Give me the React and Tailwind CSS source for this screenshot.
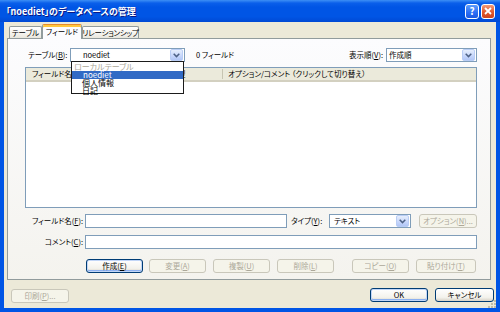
import React from "react";

const FONT = "font-['Noto_Sans_CJK_JP','Noto_Sans',sans-serif] [font-feature-settings:'palt']";

function Chevron() {
  return (
    <svg width="7" height="5" viewBox="0 0 7 5">
      <path d="M0.7 0.8 L3.5 3.6 L6.3 0.8" fill="none" stroke="#4d6185" strokeWidth="1.5" />
    </svg>
  );
}

function Combo({ className = "", textClass = "", text, children }) {
  return (
    <div className={`relative flex h-[14px] items-center border border-[#7f9db9] bg-white ${className}`}>
      <span className={`leading-none ${textClass}`}>{text}</span>
      <div className="ml-auto mr-px flex h-[12px] w-[13px] items-center justify-center rounded-[2px] border border-[#b9cdf5] bg-[linear-gradient(to_bottom,#e6eefc,#c6d6fb_60%,#b1c6f5)]">
        <Chevron />
      </div>
      {children}
    </div>
  );
}

function Btn({ children, className = "", disabled, focus }) {
  const look = disabled
    ? "border-[#c9c7ba] bg-[#f5f4ea] text-[#aca899]"
    : "border-[#003c74] bg-[linear-gradient(to_bottom,#ffffff,#f3f2ec_70%,#d8d2c6)] text-black";
  const ring = focus ? "shadow-[inset_0_0_0_1px_#c2d6f7,inset_0_-1px_0_1px_#8cb0f0]" : "";
  return (
    <button type="button" className={`flex h-[14px] items-center justify-center rounded-[3px] border leading-none ${look} ${ring} ${className}`}>
      {children}
    </button>
  );
}

function Tab({ children, className = "", active }) {
  if (active) {
    return (
      <div className={`relative z-10 -mb-px flex h-[15px] items-center justify-center rounded-t-[2px] border border-b-0 border-[#919b9c] border-t-[#e68b2c] bg-[#fcfcfe] shadow-[inset_0_2px_0_#ffc73c] leading-none ${className}`}>
        {children}
      </div>
    );
  }
  return (
    <div className={`flex h-[12px] items-center justify-center rounded-t-[2px] border border-b-0 border-[#919b9c] bg-[linear-gradient(to_bottom,#ffffff,#f4f3ee_60%,#e8e6dc)] leading-none ${className}`}>
      {children}
    </div>
  );
}

export default function App() {
  return (
    <div className={`flex h-[312px] w-[500px] flex-col overflow-hidden whitespace-nowrap bg-[#0055e5] text-[7.5px] text-black ${FONT}`}>
      {/* タイトルバー */}
      <div className="flex h-[22px] items-center bg-[linear-gradient(to_bottom,#3d8ff5_0%,#0a5fea_14%,#0055e5_32%,#0055e5_75%,#0049d4_100%)] pl-[6px] pr-[5px]">
        <span className="text-[9px] font-bold leading-none text-white [text-shadow:1px_1px_#0a1883]">「noediet」のデータベースの管理</span>
        <div className="ml-auto flex gap-[2px]">
          <div className="flex h-[15px] w-[14px] items-center justify-center rounded-[3px] border border-white bg-[linear-gradient(to_bottom,#5d9cfb,#2a6ef5_60%,#1c58e0)] text-[10px] font-bold leading-none text-white">?</div>
          <div className="flex h-[15px] w-[14px] items-center justify-center rounded-[3px] border border-white bg-[linear-gradient(to_bottom,#f19a78,#e0582d_55%,#cc4420)]">
            <svg width="8" height="8" viewBox="0 0 8 8">
              <path d="M1 1 L7 7 M7 1 L1 7" stroke="#ffffff" strokeWidth="1.8" />
            </svg>
          </div>
        </div>
      </div>

      {/* クライアント */}
      <div className="mx-[4px] mb-[4px] flex flex-1 flex-col bg-[#ece9d8]">
        {/* タブ */}
        <div className="flex h-[16px] items-end pl-[5px]">
          <Tab className="w-[33px]">テーブル</Tab>
          <Tab className="w-[40px]" active>フィールド</Tab>
          <Tab className="w-[57px] tracking-[-0.3px]">リレーションシップ</Tab>
        </div>

        {/* タブパネル */}
        <div className="ml-[3px] mr-[5px] flex h-[242px] flex-col border border-[#919b9c] bg-[linear-gradient(to_bottom,#fcfcfe,#f4f3ee)] pl-[17px] pr-[13px] pt-[9px]">
          <div className="flex h-[14px] items-center">
            <span className="w-[45px] pl-[3px] leading-none">テーブル(<u>B</u>):</span>
            <Combo className="z-20 w-[115px]" textClass="pl-[12px]" text="noediet">
              <div className="absolute left-0 right-0 top-full flex h-[33px] flex-col border border-[#1b1b1b] bg-white pt-px text-[8px]">
                <div className="flex h-[8px] items-center pl-[2px] leading-[8px] text-[#aca899]">ローカルテーブル</div>
                <div className="flex h-[8px] items-center bg-[#316ac5] pl-[11px] leading-[8px] text-white">noediet</div>
                <div className="flex h-[8px] items-center pl-[10px] leading-[8px]">個人情報</div>
                <div className="flex h-[8px] items-center pl-[10px] leading-[8px]">日記</div>
              </div>
            </Combo>
            <span className="ml-[11px] leading-none">0 フィールド</span>
            <span className="ml-auto mr-[3px] leading-none">表示順(<u>V</u>):</span>
            <Combo className="w-[91px]" textClass="pl-[2px]" text="作成順" />
          </div>

          {/* フィールド一覧 */}
          <div className="mt-[5px] flex h-[141px] flex-col border border-[#7f9db9] bg-white">
            <div className="flex h-[14px] items-center border-b-2 border-[#d3d0c0] bg-[#ebeadb] leading-none">
              <div className="w-[124px] pl-[6px]">フィールド名</div>
              <div className="h-[10px] w-px bg-[#c7c5b2]" />
              <div className="w-[71px] pl-[6px]">データ型</div>
              <div className="h-[10px] w-px bg-[#c7c5b2]" />
              <div className="pl-[5px]">オプション/コメント （クリックして切り替え）</div>
            </div>
          </div>

          {/* フィールド名 */}
          <div className="mt-[6px] flex h-[14px] items-center">
            <span className="w-[60px] pr-[2px] text-right leading-none">フィールド名(<u>F</u>):</span>
            <div className="h-[14px] w-[202px] border border-[#7f9db9] bg-white" />
            <span className="ml-[4px] w-[38px] leading-none">タイプ(<u>Y</u>):</span>
            <Combo className="w-[82px]" textClass="pl-[4px]" text="テキスト" />
            <Btn className="ml-[8px] w-[58px]" disabled>オプション(<u>N</u>)...</Btn>
          </div>

          {/* コメント */}
          <div className="mt-[7px] flex h-[14px] items-center">
            <span className="w-[60px] pr-[2px] text-right leading-none">コメント(<u>C</u>):</span>
            <div className="h-[14px] flex-1 border border-[#7f9db9] bg-white" />
          </div>

          {/* ボタン */}
          <div className="mt-[10px] flex pl-[61px]">
            <Btn className="w-[57px]" focus>作成(<u>E</u>)</Btn>
            <Btn className="ml-[6px] w-[57px]" disabled>変更(<u>A</u>)</Btn>
            <Btn className="ml-[7px] w-[57px]" disabled>複製(<u>U</u>)</Btn>
            <Btn className="ml-[7px] w-[57px]" disabled>削除(<u>L</u>)</Btn>
            <Btn className="ml-[18px] w-[57px]" disabled>コピー(<u>O</u>)</Btn>
            <Btn className="ml-[7px] w-[60px]" disabled>貼り付け(<u>T</u>)</Btn>
          </div>
        </div>

        {/* 下部 */}
        <div className="relative flex flex-1 items-start pt-[8px]">
          <Btn className="ml-[7px] mt-px w-[58px]" disabled>印刷(<u>P</u>)...</Btn>
          <Btn className="ml-auto w-[58px]" focus>OK</Btn>
          <Btn className="ml-[7px] mr-[2px] w-[59px]">キャンセル</Btn>
          <svg className="absolute bottom-0 right-0" width="8" height="8" viewBox="0 0 8 8">
            <g fill="#c1bca8">
              <rect x="6" y="0" width="2" height="2" />
              <rect x="3" y="3" width="2" height="2" />
              <rect x="6" y="3" width="2" height="2" />
              <rect x="0" y="6" width="2" height="2" />
              <rect x="3" y="6" width="2" height="2" />
              <rect x="6" y="6" width="2" height="2" />
            </g>
          </svg>
        </div>
      </div>
    </div>
  );
}
